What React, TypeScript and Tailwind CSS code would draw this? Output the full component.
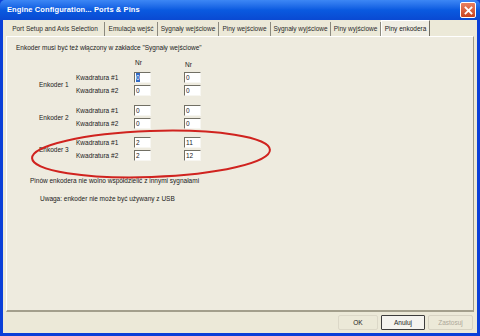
const tabs = [
  { label: 'Port Setup and Axis Selection', w: 'w-[99px]' },
  { label: 'Emulacja wejść', w: 'w-[53px]' },
  { label: 'Sygnały wejściowe', w: 'w-[61px]' },
  { label: 'Piny wejściowe', w: 'w-[52px]' },
  { label: 'Sygnały wyjściowe', w: 'w-[60px]' },
  { label: 'Piny wyjściowe', w: 'w-[50px]' },
];

const encoders = [
  { name: 'Enkoder 1', rows: [['0', '0'], ['0', '0']], mt: 'mt-[3px]' },
  { name: 'Enkoder 2', rows: [['0', '0'], ['0', '0']], mt: 'mt-[9px]' },
  { name: 'Enkoder 3', rows: [['2', '11'], ['2', '12']], mt: 'mt-[8px]' },
];

function Field({ value, selected }: { value: string; selected?: boolean }) {
  return (
    <div className="w-[17px] h-[11px] bg-white border-t border-l border-t-[#716f64] border-l-[#716f64] border-r border-b border-r-[#f7f6f1] border-b-[#f7f6f1] flex items-center pl-[1px] leading-[9px]">
      {selected ? <span className="bg-[#316ac5] text-white">{value}</span> : <span>{value}</span>}
    </div>
  );
}

export default function App() {
  return (
    <div className="w-[480px] h-[336px] flex flex-col bg-[#0a3fd8] font-['Liberation_Sans',Arial,sans-serif] text-[6.5px] text-[#1a1a1a] overflow-hidden">
      {/* title bar */}
      <div className="h-[20px] shrink-0 flex items-center justify-between px-[7px] bg-gradient-to-b from-[#3d87f5] via-[#0a5ae0] to-[#0a49d2] rounded-t-[5px]">
        <span className="text-white font-bold text-[7.5px] tracking-[0.1px]">Engine Configuration... Ports &amp; Pins</span>
        <div className="w-[16px] h-[16px] -mr-[3px] rounded-[2px] border border-white bg-gradient-to-b from-[#e9805f] to-[#c8431c] flex items-center justify-center">
          <svg width="9" height="9" viewBox="0 0 9 9">
            <path d="M1.5 1.5L7.5 7.5M7.5 1.5L1.5 7.5" stroke="white" strokeWidth="1.8" strokeLinecap="square" />
          </svg>
        </div>
      </div>

      <div className="flex-1 mx-[3px] mb-[3px] bg-[#ece9d8] flex flex-col">
        {/* tabs */}
        <div className="h-[16px] shrink-0 flex items-end pl-[3px]">
          {tabs.map((t) => (
            <div key={t.label} className={`${t.w} h-[14px] flex items-center justify-center border-r border-r-[#8c8a7f] text-[#2a2a2a]`}>
              {t.label}
            </div>
          ))}
          <div className="w-[49px] h-[16px] flex items-start pt-[3px] justify-center border-l border-t border-l-white border-t-white border-r border-r-[#716f64] bg-[#f0eee4]">
            Piny enkodera
          </div>
        </div>

        {/* panel */}
        <div className="relative mx-[3px] h-[276px] shrink-0 bg-[#eeebdf] border-t border-l border-t-white border-l-white border-r border-r-[#9d9a89] border-b-2 border-b-[#a39f8c]">
          <div className="mt-[6px] ml-[9px] leading-[9px]">Enkoder musi być też włączony w zakładce "Sygnały wejściowe"</div>

          <div className="mt-[6px] ml-[128px] flex leading-[9px]">
            <span className="w-[50px]">Nr</span>
            <span className="mt-[2px]">Nr</span>
          </div>

          {encoders.map((e) => (
            <div key={e.name} className={`${e.mt} pl-[32px] flex items-center leading-[9px]`}>
              <span className="w-[37px]">{e.name}</span>
              <div className="flex flex-col gap-[2px]">
                {e.rows.map((r, i) => (
                  <div key={i} className="flex items-center h-[11px]">
                    <span className="w-[58px]">Kwadratura #{i + 1}</span>
                    <Field value={r[0]} selected={e.name === 'Enkoder 1' && i === 0} />
                    <span className="w-[33px]" />
                    <Field value={r[1]} />
                  </div>
                ))}
              </div>
            </div>
          ))}

          <div className="mt-[15px] ml-[23px] leading-[9px]">Pinów enkodera nie wolno współdzielić z innymi sygnałami</div>
          <div className="mt-[9px] ml-[33px] leading-[9px]">Uwaga: enkoder nie może być używany z USB</div>

          <svg className="absolute left-[21px] top-[89px]" width="246" height="56" viewBox="0 0 246 56">
            <ellipse cx="123" cy="28" rx="119" ry="23" fill="none" stroke="#d0231f" strokeWidth="2" transform="rotate(-2 123 28)" />
          </svg>
        </div>

        {/* buttons */}
        <div className="flex-1 flex items-center justify-end gap-[3px] pr-[4px]">
          <div className="w-[40px] h-[15px] flex items-center justify-center border border-[#dcd8c8] rounded-[2px]">OK</div>
          <div className="w-[44px] h-[15px] flex items-center justify-center border border-[#3c3c3c] rounded-[1px] bg-[#f4f3ee]">Anuluj</div>
          <div className="w-[45px] h-[15px] flex items-center justify-center border border-[#d6d2c2] rounded-[2px] text-[#aca899]">Zastosuj</div>
        </div>
      </div>
    </div>
  );
}
